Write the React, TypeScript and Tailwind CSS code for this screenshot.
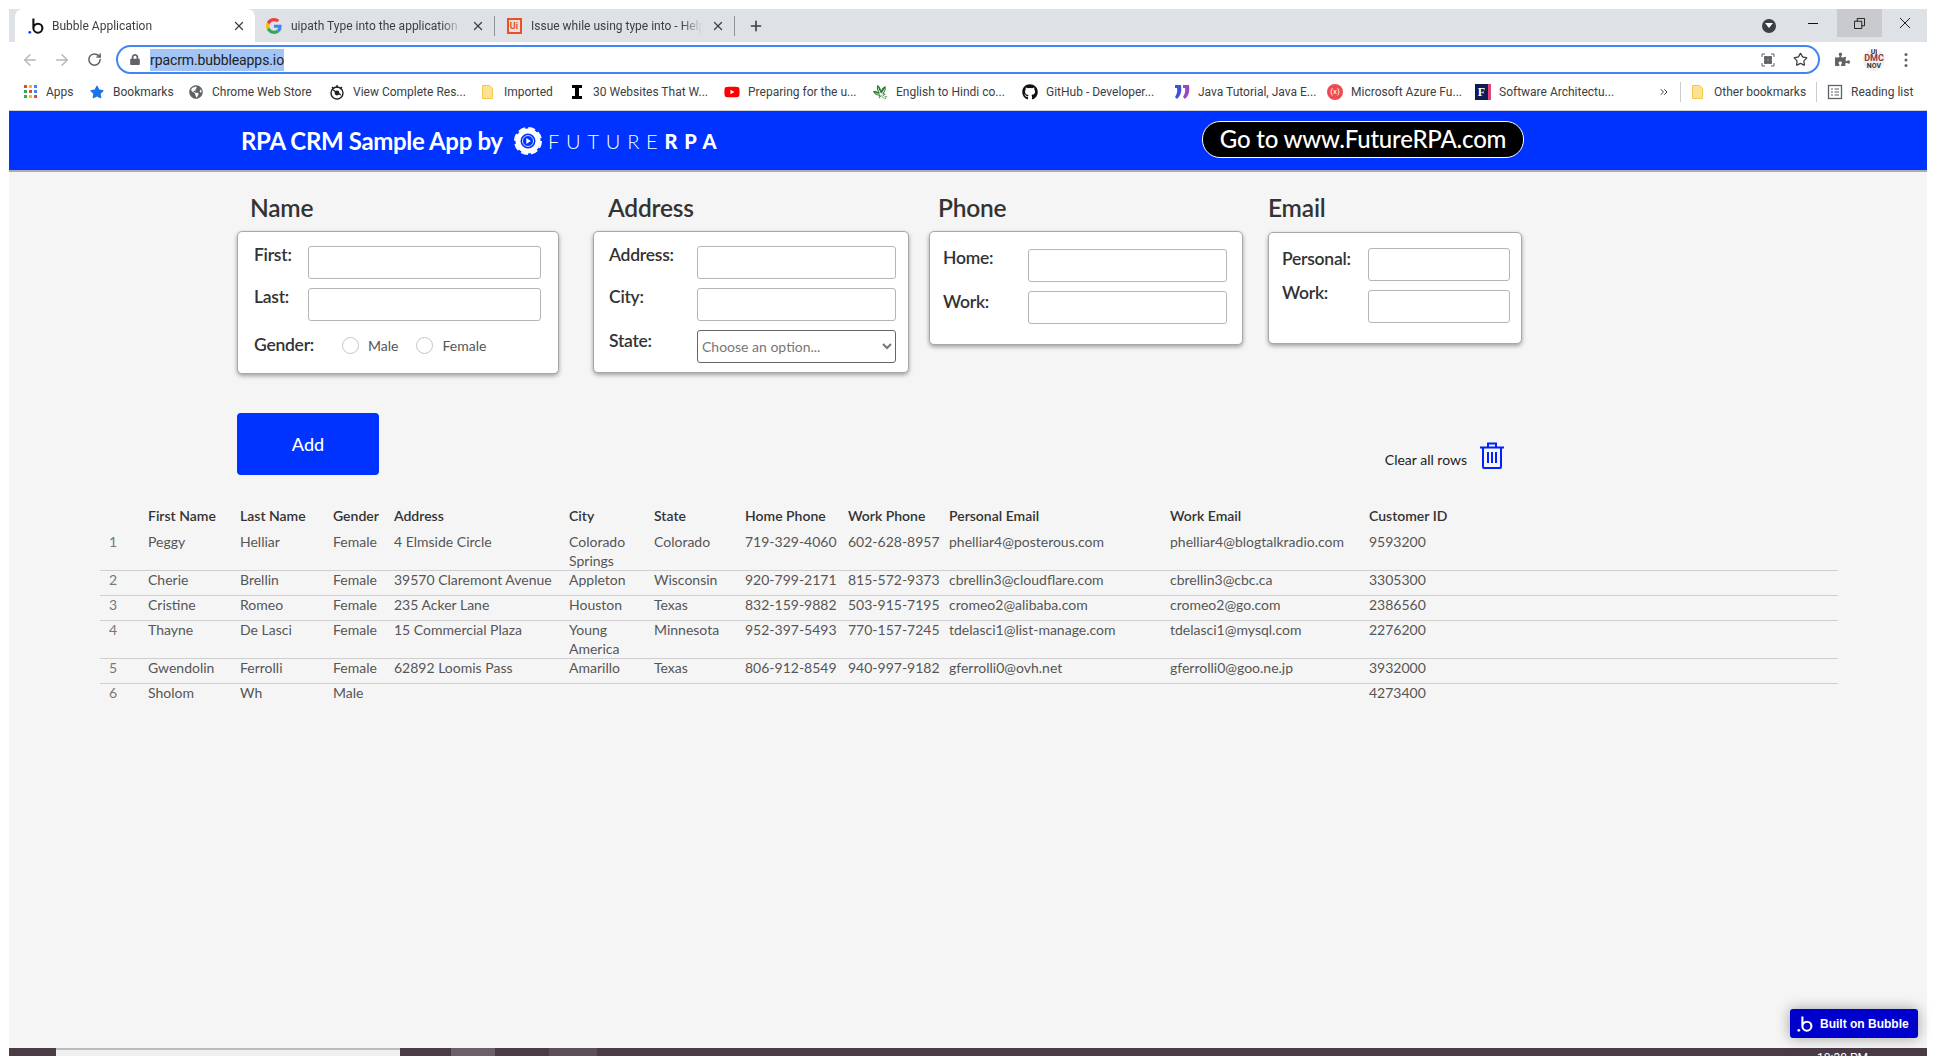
import { ReactNode } from 'react';
import { FaGithub, FaYoutube, FaStar, FaGlobeAmericas, FaPuzzlePiece, FaLock } from 'react-icons/fa';
import { GiMapleLeaf } from 'react-icons/gi';
import { ArrowLeft, ArrowRight, RotateCw, Star, X, Plus, ChevronsRight } from 'lucide-react';

const BubbleIcon = ({ color = '#111', dot = '#1a3cff' }: { color?: string; dot?: string }) => (
    <svg viewBox="0 0 16 16" className="w-4 h-4">
        <path d="M5.400 0.500v9.700a4.500 4.500 0 1 0 4.500-4.500 4.500 4.500 0 0 0-4.500 4.500" fill="none" stroke={color} strokeWidth="2.100" />
        <circle cx="1.800" cy="14.300" r="1.400" fill={dot} />
    </svg>
);

const GoogleIcon = () => (
    <svg viewBox="0 0 48 48" className="w-4 h-4">
        <path fill="#EA4335" d="M24 9.500c3.500 0 6.600 1.200 9.100 3.600l6.800-6.800C35.800 2.500 30.300 0 24 0 14.600 0 6.500 5.400 2.600 13.200l7.900 6.100C12.400 13.700 17.700 9.500 24 9.500z" />
        <path fill="#4285F4" d="M47 24.500c0-1.600-.1-3.100-.4-4.500H24v9h12.900c-.6 3-2.200 5.500-4.700 7.200l7.600 5.900C44.300 37.800 47 31.700 47 24.500z" />
        <path fill="#FBBC05" d="M10.500 28.700A14.500 14.500 0 0 1 10.500 19.300l-7.900-6.100a24 24 0 0 0 0 21.600l7.900-6.100z" />
        <path fill="#34A853" d="M24 48c6.500 0 11.900-2.100 15.800-5.800l-7.600-5.900c-2.100 1.400-4.900 2.300-8.200 2.300-6.300 0-11.600-4.200-13.500-9.900l-7.900 6.100C6.500 42.600 14.600 48 24 48z" />
    </svg>
);

const UiIcon = () => (
    <div className="w-[15px] h-[16px] border-2 border-[#f04e23] text-[#f04e23] text-[9px] leading-[12px] font-bold text-center">Ui</div>
);

const AppsIcon = () => {
    const colors = ['#ea4335', '#fbbc05', '#4285f4', '#34a853', '#ea4335', '#4285f4', '#34a853', '#fbbc05', '#ea4335'];
    return (
        <div className="grid grid-cols-3 gap-[2px] w-[13px] h-[13px]">
            {colors.map((c, i) => <span key={i} className="w-[3px] h-[3px]" style={{ background: c }} />)}
        </div>
    );
};

const FolderIcon = () => (
    <svg viewBox="0 0 16 16" className="w-4 h-4">
        <path d="M2.500 1.500h7l3 3v10h-10z" fill="#fde293" stroke="#f2c94c" />
    </svg>
);

const ReadingIcon = () => (
    <svg viewBox="0 0 16 16" className="w-4 h-4" fill="none" stroke="#5f6368">
        <rect x="1.500" y="1.500" width="13" height="13" strokeWidth="1.300" />
        <path d="M4 5h2M7.500 5H12M4 8h2M7.500 8H12M4 11h2M7.500 11H12" strokeWidth="1.200" />
    </svg>
);

const StopwatchIcon = () => (
    <svg viewBox="0 0 16 16" className="w-4 h-4">
        <circle cx="8" cy="9" r="6" fill="#fff" stroke="#222" strokeWidth="1.400" />
        <path d="M4 6l8 5M8 1v3M3 3l2 2M13 3l-2 2" stroke="#222" strokeWidth="1.400" />
        <circle cx="8" cy="9" r="2.400" fill="#222" />
    </svg>
);

const IBeamIcon = () => (
    <svg viewBox="0 0 16 16" className="w-4 h-4">
        <path d="M3 1h10v3h-3v8h3v3H3v-3h3V4H3z" fill="#000" />
    </svg>
);

const JavaIcon = () => (
    <svg viewBox="0 0 16 16" className="w-4 h-4">
        <path d="M1 1h6c1 7-.5 11-4 14l-2-2c2-3 2.600-6 2-9H1z" fill="#3f51d8" />
        <path d="M9 1h6c1 7-.5 11-4 14l-2-2c2-3 2.600-6 2-9H9z" fill="#9b45c9" />
    </svg>
);

const AzureIcon = () => (
    <div className="w-4 h-4 rounded-full bg-[#ef4a4f] text-white text-[8px] leading-4 text-center">(x)</div>
);

const SoftwareIcon = () => (
    <div className="w-[16px] h-[16px] bg-[#101a55] border-r-[3px] border-[#e0457b] text-white text-[12px] leading-4 font-bold text-center font-['Liberation_Serif',serif]">F</div>
);

const bookmarks: { label: string; icon: ReactNode; w: string }[] = [
    { label: 'Apps', icon: <AppsIcon />, w: 'w-[67px]' },
    { label: 'Bookmarks', icon: <FaStar className="w-[14px] h-[14px] text-[#1a73e8]" />, w: 'w-[99px]' },
    { label: 'Chrome Web Store', icon: <FaGlobeAmericas className="w-[14px] h-[14px] text-[#5f6368]" />, w: 'w-[141px]' },
    { label: 'View Complete Res...', icon: <StopwatchIcon />, w: 'w-[151px]' },
    { label: 'Imported', icon: <FolderIcon />, w: 'w-[89px]' },
    { label: '30 Websites That W...', icon: <IBeamIcon />, w: 'w-[155px]' },
    { label: 'Preparing for the u...', icon: <FaYoutube className="w-4 h-4 text-[#f00]" />, w: 'w-[148px]' },
    { label: 'English to Hindi co...', icon: <GiMapleLeaf className="w-4 h-4 text-[#2e7d32]" />, w: 'w-[150px]' },
    { label: 'GitHub - Developer...', icon: <FaGithub className="w-4 h-4 text-[#111]" />, w: 'w-[152px]' },
    { label: 'Java Tutorial, Java E...', icon: <JavaIcon />, w: 'w-[153px]' },
    { label: 'Microsoft Azure Fu...', icon: <AzureIcon />, w: 'w-[148px]' },
    { label: 'Software Architectu...', icon: <SoftwareIcon />, w: 'w-[183px]' },
];

const rows = [
    ['1', 'Peggy', 'Helliar', 'Female', '4 Elmside Circle', 'Colorado Springs', 'Colorado', '719-329-4060', '602-628-8957', 'phelliar4@posterous.com', 'phelliar4@blogtalkradio.com', '9593200'],
    ['2', 'Cherie', 'Brellin', 'Female', '39570 Claremont Avenue', 'Appleton', 'Wisconsin', '920-799-2171', '815-572-9373', 'cbrellin3@cloudflare.com', 'cbrellin3@cbc.ca', '3305300'],
    ['3', 'Cristine', 'Romeo', 'Female', '235 Acker Lane', 'Houston', 'Texas', '832-159-9882', '503-915-7195', 'cromeo2@alibaba.com', 'cromeo2@go.com', '2386560'],
    ['4', 'Thayne', 'De Lasci', 'Female', '15 Commercial Plaza', 'Young America', 'Minnesota', '952-397-5493', '770-157-7245', 'tdelasci1@list-manage.com', 'tdelasci1@mysql.com', '2276200'],
    ['5', 'Gwendolin', 'Ferrolli', 'Female', '62892 Loomis Pass', 'Amarillo', 'Texas', '806-912-8549', '940-997-9182', 'gferrolli0@ovh.net', 'gferrolli0@goo.ne.jp', '3932000'],
    ['6', 'Sholom', 'Wh', 'Male', '', '', '', '', '', '', '', '4273400'],
];

const headers = ['', 'First Name', 'Last Name', 'Gender', 'Address', 'City', 'State', 'Home Phone', 'Work Phone', 'Personal Email', 'Work Email', 'Customer ID'];

const tableCols = 'grid grid-cols-[48px_92px_93px_61px_175px_85px_91px_103px_101px_221px_199px_1fr]';

function Tab({ icon, title, active, w }: { icon: ReactNode; title: string; active?: boolean; w: string }) {
    return (
        <div className={`${w} h-full flex items-center shrink-0 ${active ? 'bg-white rounded-t-lg pl-[13px] pr-[9px] gap-[8px]' : 'pl-[11px] pr-[9px] gap-[9px]'}`}>
            <div className="w-4 h-4 shrink-0 flex items-center justify-center">{icon}</div>
            <div className="flex-1 text-[12px] text-[#3c4043] whitespace-nowrap overflow-hidden [mask-image:linear-gradient(to_right,black_88%,transparent)]">{title}</div>
            <X className="w-[14px] h-[14px] text-[#3c4043] shrink-0" strokeWidth={2.2} />
        </div>
    );
}

function TextBox({ w }: { w: string }) {
    return <input className={`${w} h-[33px] bg-white border border-[#b5b5b5] rounded-[3px] outline-none`} />;
}

const labelCls = 'text-[17.5px] leading-[20px] font-semibold text-[#333] tracking-[-0.25px]';

function Field({ label, w, input, offset }: { label: string; w: string; input: string; offset: string }) {
    return (
        <div className="flex items-start">
            <div className={`${w} ${offset} ${labelCls} shrink-0`}>{label}</div>
            <TextBox w={input} />
        </div>
    );
}

function Radio({ label }: { label: string }) {
    return (
        <div className="flex items-center gap-[9px]">
            <span className="w-[17px] h-[17px] rounded-full border border-[#c4c4c4] bg-white" />
            <span className="text-[14px] text-[#555]">{label}</span>
        </div>
    );
}

function Section({ title, titleInset, children }: { title: string; titleInset: string; children: ReactNode }) {
    return (
        <div className="shrink-0">
            <div className={`h-[38px] ${titleInset} text-[24.5px] leading-[30px] font-semibold text-[#333] tracking-[-0.2px]`}>{title}</div>
            {children}
        </div>
    );
}

const cardCls = 'bg-white border border-[#a8a8a8] rounded-[5px] shadow-[0_2px_4px_rgba(0,0,0,0.35)] flex flex-col';

export default function App() {
    return (
        <div className="w-[1936px] h-[1056px] bg-white pt-[9px] px-[9px] flex flex-col overflow-hidden relative font-['Lato',sans-serif]">
            {/* browser chrome */}
            <div className="font-['Roboto',sans-serif] shrink-0">
                <div className="h-[33px] bg-[#dee1e6] flex items-center pl-[6px] relative">
                    <Tab active w="w-[240px]" title="Bubble Application" icon={<BubbleIcon />} />
                    <Tab w="w-[239px]" title="uipath Type into the application r" icon={<GoogleIcon />} />
                    <div className="w-px h-[20px] bg-[#8e9297] shrink-0" />
                    <Tab w="w-[239px]" title="Issue while using type into - Help" icon={<UiIcon />} />
                    <div className="w-px h-[20px] bg-[#8e9297] shrink-0" />
                    <Plus className="w-4 h-4 ml-[13px] text-[#3c4043]" strokeWidth={2.4} />
                    <div className="ml-auto flex items-center h-full">
                        <div className="w-[14px] h-[14px] rounded-full bg-[#3c4043] flex items-center justify-center mr-[32px]">
                            <span className="border-x-[4px] border-x-transparent border-t-[5px] border-t-white" />
                        </div>
                        <svg viewBox="0 0 10 10" className="w-[10px] h-[10px] mr-[19px] -mt-[6px]" stroke="#111"><path d="M0 5.500h10" /></svg>
                        <div className="w-[45px] h-[28px] bg-[#c8cace] flex items-center justify-center self-start">
                            <svg viewBox="0 0 12 12" className="w-[11px] h-[11px]" fill="none" stroke="#111">
                                <path d="M.5 3.500h8v8h-8zM3.500 3.500v-3h8v8h-3" />
                            </svg>
                        </div>
                        <svg viewBox="0 0 10 10" className="w-[10px] h-[10px] ml-[18px] mr-[17px] -mt-[6px]" stroke="#222"><path d="M0 0l10 10M10 0L0 10" /></svg>
                    </div>
                </div>
                <div className="h-[33px] pt-[2px] bg-white flex items-center">
                    <ArrowLeft className="w-[18px] h-[18px] text-[#b4b7bb] ml-[12px]" />
                    <ArrowRight className="w-[18px] h-[18px] text-[#b4b7bb] ml-[14px]" />
                    <RotateCw className="w-[15px] h-[15px] text-[#5f6368] ml-[16px]" strokeWidth={2.4} />
                    <div className="ml-[14px] w-[1704px] h-[29px] rounded-full border-2 border-[#4285f4] flex items-center pl-[12px] pr-[10px]">
                        <FaLock className="w-[10px] h-[11px] text-[#5f6368]" />
                        <span className="ml-[10px] text-[14px] leading-[22px] bg-[#a3c5f5] text-[#202124] tracking-[-0.1px]">rpacrm.bubbleapps.io</span>
                        <svg viewBox="0 0 14 14" className="w-[14px] h-[14px] ml-auto" fill="none" stroke="#5f6368">
                            <path d="M1 4V1h3M10 1h3v3M13 10v3h-3M4 13H1v-3" />
                            <path d="M3.500 3.500h3v3h-3zM7.500 3.500h3v3h-3zM3.500 7.500h3v3h-3zM7.500 7.500h3v3h-3z" fill="#5f6368" />
                        </svg>
                        <Star className="w-[15px] h-[15px] text-[#3c4043] ml-[18px]" />
                    </div>
                    <FaPuzzlePiece className="w-[15px] h-[15px] text-[#5f6368] ml-[15px]" />
                    <div className="w-[22px] h-[22px] rounded-full bg-[#f4eeee] ml-[13px] flex flex-col items-center justify-center leading-[7px] text-[7px] font-bold text-[#333] overflow-hidden">
                        <span className="h-[5px] overflow-hidden">UI</span>
                        <span className="text-[9px] leading-[9px] text-[#8a3a44]">DMC</span>
                        <span>NOV</span>
                    </div>
                    <svg viewBox="0 0 4 16" className="w-[4px] h-[16px] ml-[19px]" fill="#5f6368">
                        <circle cx="2" cy="2.500" r="1.500" /><circle cx="2" cy="8" r="1.500" /><circle cx="2" cy="13.500" r="1.500" />
                    </svg>
                </div>
                <div className="h-[36px] pb-[2px] bg-white flex items-center pl-[13px] border-b border-[#d0d0d0] text-[12px] text-[#3c4043] whitespace-nowrap">
                    {bookmarks.map(b => (
                        <div key={b.label} className={`${b.w} shrink-0 flex items-center gap-[8px]`}>
                            <div className="w-4 h-4 flex items-center justify-center shrink-0">{b.icon}</div>
                            <span>{b.label}</span>
                        </div>
                    ))}
                    <ChevronsRight className="w-[12px] h-[12px] text-[#3c4043]" />
                    <div className="w-px h-[20px] bg-[#ccc] ml-[10px]" />
                    <div className="ml-[9px] w-4 h-4"><FolderIcon /></div>
                    <span className="ml-[8px]">Other bookmarks</span>
                    <div className="w-px h-[20px] bg-[#ccc] ml-[10px]" />
                    <div className="ml-[10px] w-4 h-4"><ReadingIcon /></div>
                    <span className="ml-[8px]">Reading list</span>
                </div>
            </div>

            {/* app header */}
            <div className="h-[61px] shrink-0 bg-[#0033ff] border-b-2 border-[#a9adb5] flex items-center pl-[232px] text-white">
                <div className="text-[24px] font-bold tracking-[-0.35px] leading-none w-[263px] whitespace-nowrap">RPA CRM Sample App by</div>
                <svg viewBox="0 0 28 28" className="w-[28px] h-[28px] ml-[10px]" fill="none" stroke="#fff">
                    <circle cx="14" cy="14" r="10" strokeWidth="5" />
                    <circle cx="14" cy="14" r="13" strokeWidth="2" strokeDasharray="7 3.200" />
                    <circle cx="14" cy="14" r="5.500" strokeWidth="0.800" />
                    <path d="M12.300 11l4.500 3-4.500 3z" fill="#fff" stroke="none" />
                </svg>
                <div className="ml-[6px] w-[172px] text-[20px] leading-none tracking-[6.800px] font-light whitespace-nowrap">FUTURE<span className="font-black">RPA</span></div>
                <div className="ml-[482px] mb-[3px] w-[322px] h-[37px] rounded-[18px] bg-black border border-white flex items-center justify-center text-[24px] font-medium tracking-[-0.2px]">Go to www.FutureRPA.com</div>
            </div>

            {/* app body */}
            <div className="flex-1 bg-[#f5f5f5] pt-[21px] min-h-0 relative">
                <div className="flex items-start pl-[228px]">
                    <Section title="Name" titleInset="pl-[13px]">
                        <div className={`${cardCls} w-[322px] h-[143px] pt-[14px] pl-[16px] gap-[9px]`}>
                            <Field label="First:" w="w-[54px]" input="w-[233px]" offset="-mt-[1px]" />
                            <Field label="Last:" w="w-[54px]" input="w-[233px]" offset="-mt-[1px]" />
                            <div className="flex items-center mt-[5px] h-[20px]">
                                <div className={`w-[88px] ${labelCls}`}>Gender:</div>
                                <div className="flex gap-[18px]">
                                    <Radio label="Male" />
                                    <Radio label="Female" />
                                </div>
                            </div>
                        </div>
                    </Section>
                    <div className="ml-[34px]">
                        <Section title="Address" titleInset="pl-[15px]">
                            <div className={`${cardCls} w-[316px] h-[142px] pt-[14px] pl-[15px] gap-[9px]`}>
                                <Field label="Address:" w="w-[88px]" input="w-[199px]" offset="-mt-[1px]" />
                                <Field label="City:" w="w-[88px]" input="w-[199px]" offset="-mt-[1px]" />
                                <div className="flex items-start">
                                    <div className={`w-[88px] mt-[1px] ${labelCls}`}>State:</div>
                                    <select className="w-[199px] h-[33px] bg-white border border-[#666] rounded-[3px] text-[14px] text-[#777] outline-none">
                                        <option>Choose an option...</option>
                                    </select>
                                </div>
                            </div>
                        </Section>
                    </div>
                    <div className="ml-[20px]">
                        <Section title="Phone" titleInset="pl-[9px]">
                            <div className={`${cardCls} w-[314px] h-[114px] pt-[17px] pl-[13px] gap-[9px]`}>
                                <Field label="Home:" w="w-[85px]" input="w-[199px]" offset="-mt-[1px]" />
                                <Field label="Work:" w="w-[85px]" input="w-[199px]" offset="mt-[1px]" />
                            </div>
                        </Section>
                    </div>
                    <div className="ml-[25px]">
                        <Section title="Email" titleInset="pl-[0px]">
                            <div className={`${cardCls} w-[254px] h-[112px] mt-[1px] pt-[15px] pl-[13px] gap-[9px]`}>
                                <Field label="Personal:" w="w-[86px]" input="w-[142px]" offset="mt-[1px]" />
                                <Field label="Work:" w="w-[86px]" input="w-[142px]" offset="-mt-[7px]" />
                            </div>
                        </Section>
                    </div>
                </div>

                <div className="mt-[39px] ml-[228px] w-[1267px] flex items-start justify-between">
                    <button className="w-[142px] h-[62px] bg-[#0033ff] rounded-[4px] text-white text-[18px] font-medium">Add</button>
                    <div className="flex items-start mt-[29px]">
                        <span className="mt-[8px] text-[14px] leading-[20px] text-[#222]">Clear all rows</span>
                        <svg viewBox="0 0 24 27" className="w-[24px] h-[27px] ml-[13px]" fill="none" stroke="#0022ff" strokeWidth="2">
                            <path d="M0 5.500h24M8 5.500V1.500h8v4M3 5.500V25a1 1 0 0 0 1 1h16a1 1 0 0 0 1-1V5.500" />
                            <path d="M8 10v11M12 10v11M16 10v11" />
                        </svg>
                    </div>
                </div>

                {/* rows */}
                <div className="mt-[31px] ml-[91px] w-[1738px]">
                    <div className={`${tableCols} h-[27px] text-[14px] leading-[19px] font-semibold text-[#333]`}>
                        {headers.map((h, i) => <div key={i}>{h}</div>)}
                    </div>
                    {rows.map((r, i) => (
                        <div key={r[0]} className={`${tableCols} min-h-[25px] text-[14px] leading-[18.5px] text-[#555] ${i < 5 ? 'border-b border-[#cfcfcf]' : ''}`}>
                            {r.map((c, j) => (
                                <div key={j} className={j === 0 ? 'pl-[9px] text-[#777]' : 'pr-[8px]'}>{c}</div>
                            ))}
                        </div>
                    ))}
                </div>
            </div>

            {/* taskbar remnant at the bottom */}
            <div className="h-[8px] shrink-0 bg-[#4a3b47] flex font-['Roboto',sans-serif] overflow-hidden">
                <div className="w-[47px]" />
                <div className="w-[344px] bg-[#f0f0f0] border-t-2 border-[#bcbcbc]" />
                <div className="w-[51px]" />
                <div className="w-[44px] bg-[#6b5f6a]" />
                <div className="w-[54px]" />
                <div className="w-[48px] bg-[#5c4f58]" />
                <div className="ml-auto mr-[59px] pt-[3px] text-[12px] leading-[14px] text-white whitespace-nowrap">10:30 PM</div>
            </div>

            {/* floating badge */}
            <div className="absolute left-[1790px] top-[1009px] w-[128px] h-[29px] bg-[#0000cd] rounded-[3px] shadow-[0_0_14px_rgba(0,0,0,0.35)] flex items-center pl-[7px] gap-[7px] text-white text-[12px] font-bold font-['Liberation_Sans',sans-serif]">
                <BubbleIcon color="#fff" dot="#fff" />
                <span>Built on Bubble</span>
            </div>
        </div>
    );
}
